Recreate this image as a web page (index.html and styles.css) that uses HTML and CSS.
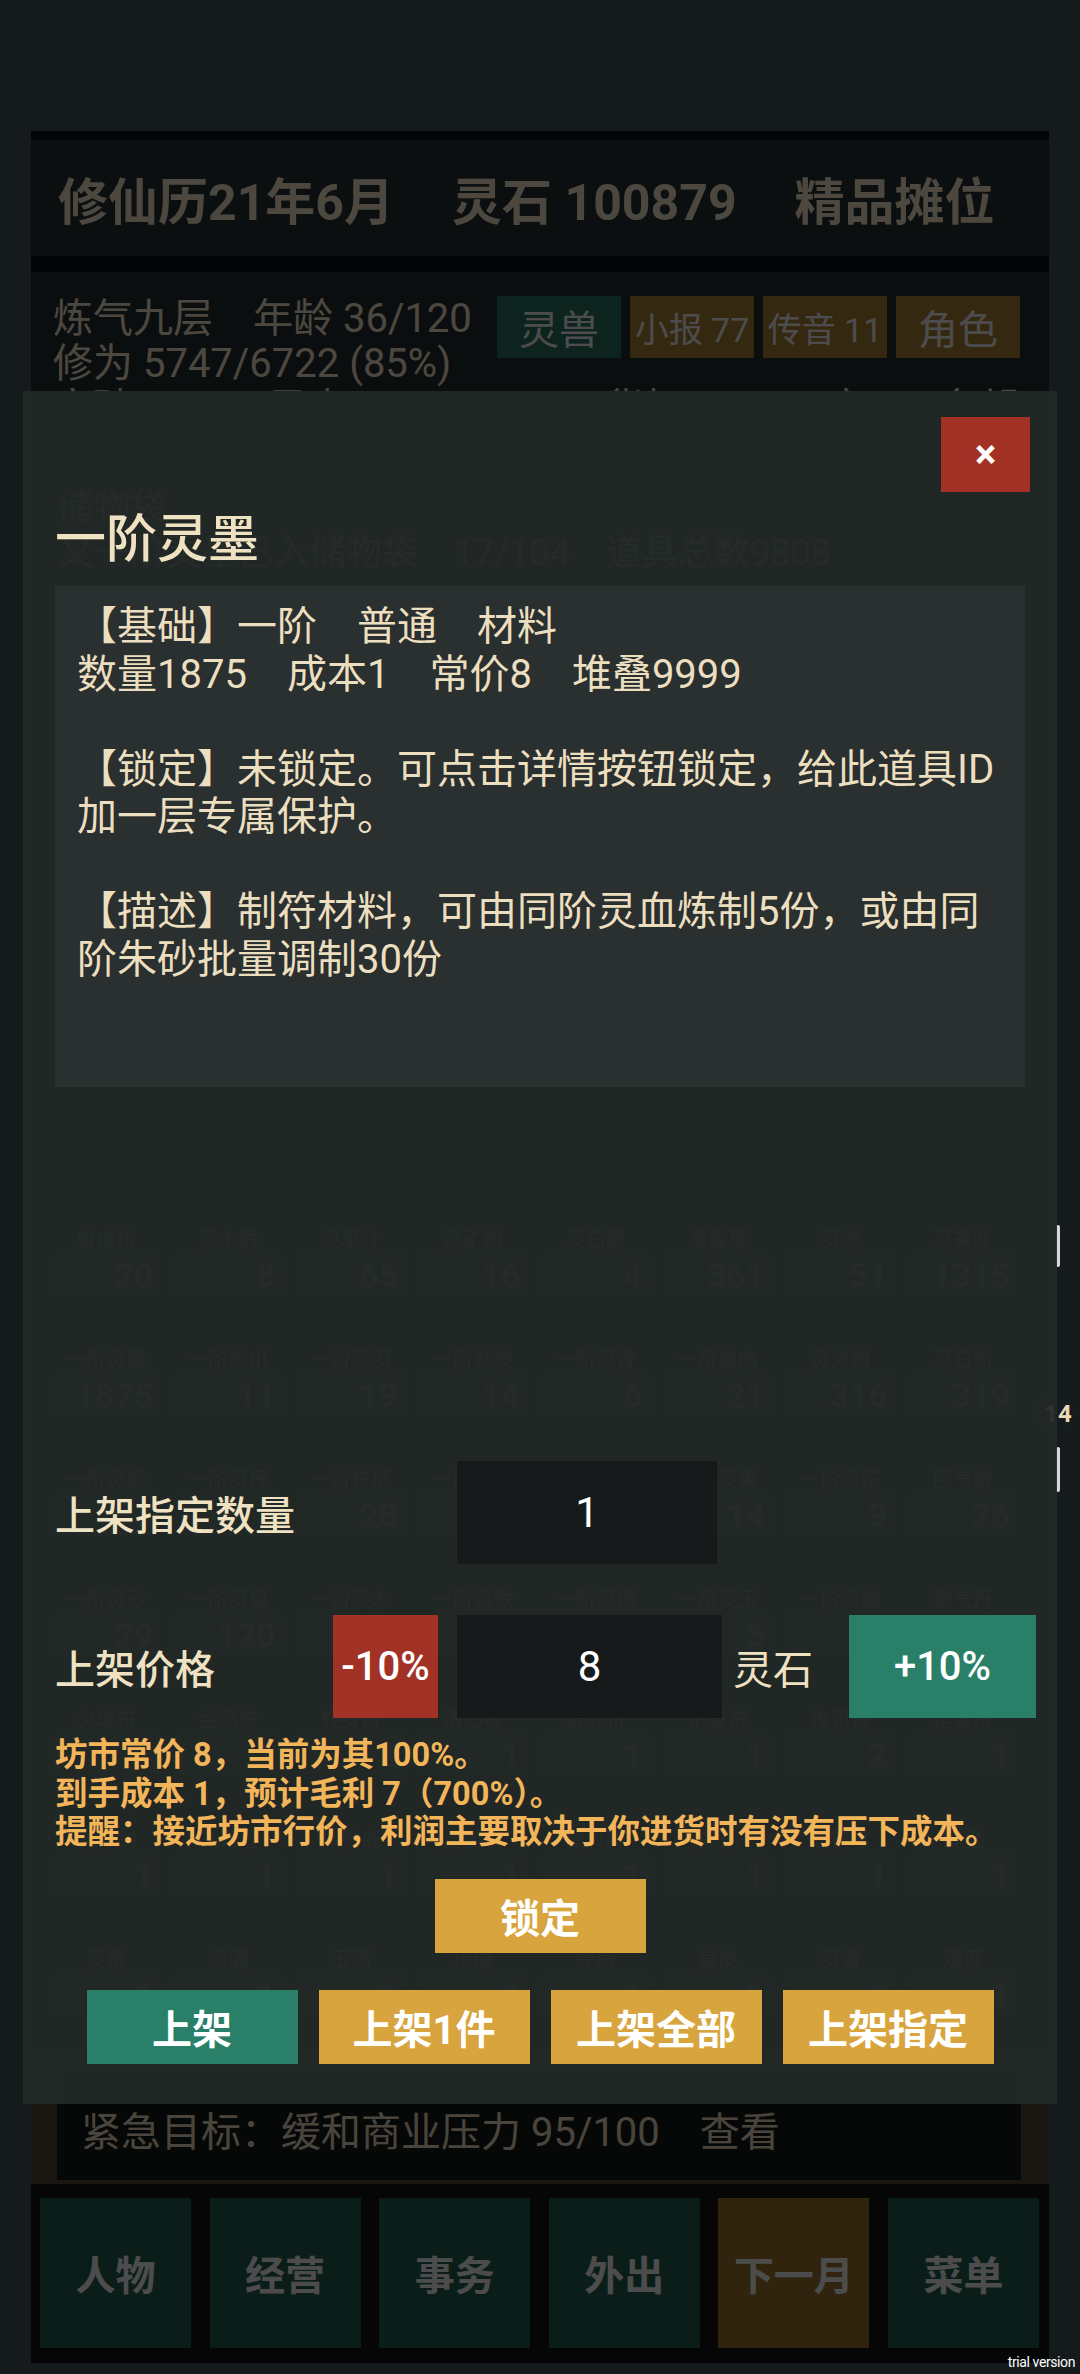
FILE: index.html
```html
<!DOCTYPE html>
<html lang="zh-CN">
<head>
<meta charset="UTF-8">
<meta name="viewport" content="width=device-width, initial-scale=1.0">
<title>精品摊位</title>
<link rel="stylesheet" href="styles.css">
</head>
<body>
<div class="app">
    <div class="topbar">
        <span>修仙历21年6月</span>
        <span>灵石 100879</span>
        <span>精品摊位</span>
    </div>
    <div class="stats">
        <div class="stats-top">
            <div class="stats-text">
                <div>炼气九层　年龄 36/120</div>
                <div>修为 5747/6722 (85%)</div>
            </div>
            <div class="quick">
                <button class="qbtn green">灵兽</button>
                <button class="qbtn gold small">小报 77</button>
                <button class="qbtn gold small">传音 11</button>
                <button class="qbtn gold">角色</button>
            </div>
        </div>
        <div class="stats-line">
            <span>突破 40%</span><span>风声 1000/2750</span><span>货架 7/17</span><span>市1</span><span>名望 74</span>
        </div>
    </div>
    <div class="bag">
        <div class="bag-title">储物袋</div>
        <div class="bag-sub">又一阶灵墨已入储物袋　17/104　道具总数9808</div>
        <div class="bag-grid" id="bag-grid"></div>
    </div>
    <div class="goal">
        <div class="goal-box">紧急目标：缓和商业压力 95/100　查看</div>
    </div>
    <div class="nav">
        <button class="nav-btn">人物</button>
        <button class="nav-btn">经营</button>
        <button class="nav-btn">事务</button>
        <button class="nav-btn">外出</button>
        <button class="nav-btn gold">下一月</button>
        <button class="nav-btn">菜单</button>
    </div>
</div>

<div class="backdrop"></div>

<div class="float-bar bar-top"></div>
<div class="float-badge">14</div>
<div class="float-bar bar-bottom"></div>

<div class="modal">
    <div class="modal-head">
        <button class="close-btn">×</button>
    </div>
    <h2 class="item-name">一阶灵墨</h2>
    <div class="item-info">
        <p>【基础】一阶　普通　材料<br>数量1875　成本1　常价8　堆叠9999</p>
        <p>【锁定】未锁定。可点击详情按钮锁定，给此道具ID加一层专属保护。</p>
        <p>【描述】制符材料，可由同阶灵血炼制5份，或由同阶朱砂批量调制30份</p>
    </div>

    <div class="form-row qty-row">
        <label class="row-label">上架指定数量</label>
        <input class="field" type="text" value="1">
    </div>
    <div class="form-row price-row">
        <label class="row-label">上架价格</label>
        <button class="step-btn red">-10%</button>
        <input class="field price-field" type="text" value="8">
        <span class="unit">灵石</span>
        <button class="step-btn green wide">+10%</button>
    </div>

    <div class="hint">
        <div>坊市常价 8，当前为其100%。</div>
        <div>到手成本 1，预计毛利 7（700%）。</div>
        <div>提醒：接近坊市行价，利润主要取决于你进货时有没有压下成本。</div>
    </div>

    <div class="lock-wrap">
        <button class="act-btn gold">锁定</button>
    </div>
    <div class="actions">
        <button class="act-btn green">上架</button>
        <button class="act-btn gold">上架1件</button>
        <button class="act-btn gold">上架全部</button>
        <button class="act-btn gold">上架指定</button>
    </div>
</div>

<div class="watermark">trial version</div>

<script>
const bagRows = [
    [['兽血粉', 20], ['灵木屑', 8], ['灵草汁', 65], ['灵矿粉', 16], ['灵石屑', 4], ['凝露草', 361], ['灵米', 51], ['灵茶叶', 1315]],
    [['一阶灵墨', 1875], ['一阶制爪', 11], ['一阶灵羽', 19], ['一阶制皮', 14], ['一阶灵骨', 6], ['一阶兽肉', 21], ['灵米粉', 316], ['灵石粉', 319]],
    [['一阶灵纸', 33], ['一阶灵丹', 17], ['一阶符纸', 28], ['一阶灵丝', 12], ['一阶灵布', 7], ['一阶灵果', 14], ['一阶灵花', 9], ['回气散', 26]],
    [['一阶灵砂', 29], ['一阶灵泉', 120], ['一阶灵木', 3], ['一阶灵铁', 8], ['一阶灵铜', 2], ['一阶灵玉', 5], ['一阶灵蜡', 11], ['聚气丹', 6]],
    [['火球符', 1], ['金刚符', 1], ['轻身符', 2], ['清心符', 1], ['辟邪符', 1], ['护身符', 1], ['传讯符', 2], ['定身符', 1]],
    [['青锋剑', 1], ['玄铁盾', 1], ['储物戒', 1], ['灵兽袋', 1], ['聚灵阵', 1], ['炼丹炉', 1], ['制符笔', 1], ['阵盘', 1]],
    [['灵茶', 1], ['灵酒', 1], ['玉简', 1], ['地图', 1], ['令牌', 1], ['兽皮', 1], ['灵蛋', 1], ['残页', 1]]
];

const grid = document.getElementById('bag-grid');
bagRows.forEach(row => {
    row.forEach(([name, count]) => {
        const cell = document.createElement('div');
        cell.className = 'bag-cell';
        cell.innerHTML = `<div class="cell-name">${name}</div><div class="cell-count">${count}</div>`;
        grid.appendChild(cell);
    });
});
</script>
</body>
</html>
```

FILE: styles.css
```css
* {
    box-sizing: border-box;
}
html, body {
    margin: 0;
}
body {
    width: 1080px;
    height: 2374px;
    overflow: hidden;
    position: relative;
    padding-top: 131px;
    background-color: #49595f;
    font-family: Roboto, "Noto Sans CJK SC", sans-serif;
    color: #fff0d6;
}
button {
    font-family: inherit;
    border: none;
    cursor: pointer;
    padding: 0;
}

/* game screen under the dialog */
.app {
    margin: 0 31px;
    height: 2232px;
    display: flex;
    flex-direction: column;
    background-color: #252f32;
}
.topbar {
    height: 141px;
    border-top: 9px solid #0e1114;
    border-bottom: 16px solid #0e1114;
    background-color: #253232;
    display: flex;
    align-items: center;
    gap: 58px;
    padding-left: 27px;
    font-size: 50px;
    font-weight: 700;
}
.stats {
    height: 119px;
    overflow: hidden;
    padding: 24px 20px 0 22px;
    font-size: 40px;
    line-height: 45px;
}
.stats-top {
    display: flex;
}
.stats-text {
    width: 444px;
}
.quick {
    display: flex;
    gap: 9px;
}
.qbtn {
    width: 124px;
    height: 62px;
    color: #fff;
    font-size: 40px;
}
.qbtn.small {
    font-size: 34px;
}
.qbtn.green {
    background-color: #287564;
}
.qbtn.gold {
    background-color: #b18539;
}
.stats-line {
    display: flex;
    gap: 50px;
    white-space: nowrap;
}
.bag {
    flex: 1;
    overflow: hidden;
    padding: 95px 0 0 14px;
}
.bag-title, .bag-sub {
    padding-left: 13px;
    font-size: 36px;
    line-height: 45px;
}
.bag-grid {
    margin-top: 649px;
    width: 979px;
    display: grid;
    grid-template-columns: repeat(8, 1fr);
    row-gap: 50px;
}
.bag-cell {
    padding: 0 8px;
    text-align: right;
}
.cell-name {
    font-size: 20px;
    line-height: 30px;
    text-align: center;
    white-space: nowrap;
}
.cell-count {
    font-size: 34px;
    font-weight: 700;
    line-height: 40px;
    background-color: #2c3a3c;
    padding-right: 6px;
}
.goal {
    height: 134px;
    padding: 20px 28px 4px 26px;
    background-color: #574d3c;
}
.goal-box {
    height: 110px;
    background-color: #171a1a;
    padding: 39px 0 0 24px;
    font-size: 40px;
    line-height: 48px;
    color: #f5e4c8;
}
.nav {
    height: 179px;
    display: flex;
    gap: 18.6px;
    padding: 14px 10px 15px 9px;
    background-color: #141717;
}
.nav-btn {
    flex: 1;
    background-color: #256355;
    color: #fff;
    font-size: 40px;
    font-weight: 700;
}
.nav-btn.gold {
    background-color: #a07b32;
}

/* dim layer */
.backdrop {
    position: absolute;
    inset: 0;
    background-color: rgba(0, 0, 0, 0.7);
    z-index: 10;
}
.float-bar {
    position: absolute;
    left: 1056px;
    width: 4px;
    border-radius: 2px;
    background-color: #d8d8d8;
    z-index: 15;
}
.bar-top {
    top: 1225px;
    height: 42px;
}
.bar-bottom {
    top: 1447px;
    height: 45px;
}
.float-badge {
    position: absolute;
    left: 1036px;
    top: 1392px;
    width: 44px;
    height: 44px;
    border-radius: 50%;
    background-color: #161b1e;
    color: #eadbb5;
    font-size: 24px;
    font-weight: 700;
    line-height: 44px;
    text-align: center;
    z-index: 15;
}

/* item dialog */
.modal {
    position: absolute;
    left: 23px;
    top: 391px;
    width: 1034px;
    padding: 26px 32px 40px;
    background-color: rgba(35, 41, 39, 0.94);
    z-index: 20;
}
.modal-head {
    display: flex;
    justify-content: flex-end;
}
.close-btn {
    width: 89px;
    height: 75px;
    margin-right: -5px;
    background-color: #a23225;
    color: #fff;
    font-size: 40px;
    font-weight: 700;
}
.item-name {
    margin: 18px 0 0;
    font-size: 51px;
    line-height: 60px;
    font-weight: 500;
    color: #efe2c2;
}
.item-info {
    margin-top: 16px;
    height: 501px;
    padding: 17px 22px;
    background-color: #2a2f2f;
    font-size: 40px;
    line-height: 47.5px;
    color: #ecdfc0;
}
.item-info p {
    margin: 0 0 47.5px;
}
.form-row {
    display: flex;
    align-items: center;
    height: 103px;
}
.form-row > * {
    flex-shrink: 0;
}
.qty-row {
    margin-top: 374px;
}
.price-row {
    margin-top: 51px;
}
.row-label {
    width: 402px;
    font-size: 40px;
    font-weight: 500;
    color: #efe2c2;
}
.price-row .row-label {
    width: 278px;
}
.field {
    width: 260px;
    height: 103px;
    border: none;
    outline: none;
    background-color: #161a1a;
    color: #fff;
    font-family: inherit;
    font-size: 42px;
    text-align: center;
}
.price-field {
    width: 265px;
    margin-left: 19px;
}
.step-btn {
    width: 105px;
    height: 103px;
    color: #fff;
    font-size: 40px;
    font-weight: 500;
}
.step-btn.wide {
    width: 187px;
    margin-left: 36px;
}
.step-btn.red {
    background-color: #a23225;
}
.step-btn.green {
    background-color: #2a7f69;
}
.unit {
    width: 80px;
    margin-left: 11px;
    font-size: 40px;
    color: #efe2c2;
}
.hint {
    margin-top: 18px;
    font-size: 32.5px;
    line-height: 38.5px;
    font-weight: 700;
    color: #f2b55a;
    white-space: nowrap;
}
.lock-wrap {
    margin-top: 27px;
    display: flex;
    justify-content: center;
}
.actions {
    margin-top: 37px;
    display: flex;
    justify-content: center;
    gap: 21px;
}
.act-btn {
    width: 211px;
    height: 74px;
    color: #fff;
    font-size: 40px;
    font-weight: 700;
}
.act-btn.gold {
    background-color: #d8a43d;
}
.act-btn.green {
    background-color: #2a7f69;
}
.watermark {
    position: absolute;
    right: 5px;
    bottom: 4px;
    font-size: 14px;
    letter-spacing: -0.4px;
    color: #fff;
    z-index: 30;
}
```
